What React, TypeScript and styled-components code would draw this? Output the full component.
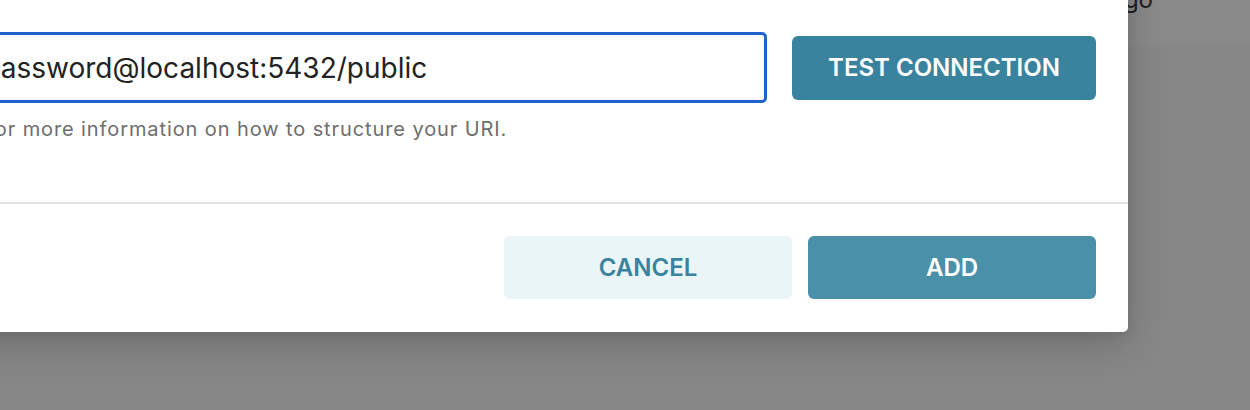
import React from "react";
import styled, { createGlobalStyle } from "styled-components";

const GlobalStyle = createGlobalStyle`
  html, body {
    margin: 0;
    padding: 0;
    background: #878787;
  }
  body {
    font-family: Inter, "Noto Sans", "Liberation Sans", sans-serif;
  }
`;

const Page = styled.div`
  position: relative;
  width: 1250px;
  height: 410px;
  overflow: hidden;
  background: #878787;
`;

const TopBar = styled.div`
  display: flex;
  justify-content: flex-end;
  align-items: flex-end;
  height: 45px;
  padding-right: 97px;
  box-sizing: border-box;
  background: #8a8a8a;
`;

const BrandText = styled.span`
  font-size: 24px;
  line-height: 1;
  color: #1e1e1e;
  margin-bottom: 33px;
`;

const Modal = styled.div`
  position: absolute;
  top: -40px;
  left: -302px;
  width: 1430px;
  background: #ffffff;
  border-radius: 5px;
  box-shadow: 0 12px 40px rgba(0, 0, 0, 0.18), 0 4px 12px rgba(0, 0, 0, 0.08);
  display: flex;
  flex-direction: column;
`;

const Body = styled.div`
  padding: 72px 32px 59px 32px;
`;

const InputRow = styled.div`
  display: flex;
  align-items: center;
  gap: 25px;
`;

const UriInput = styled.input`
  flex: 1;
  height: 71px;
  box-sizing: border-box;
  border: 3px solid #1f62c9;
  border-radius: 5px;
  padding: 0 0 0 16px;
  font-family: Inter, "Noto Sans", "Liberation Sans", sans-serif;
  font-size: 28px;
  color: #222222;
  outline: none;
  background: #fff;
`;

const Button = styled.button<{ $variant: "primary" | "solid" | "ghost" }>`
  border: 0;
  outline: 0;
  border-radius: 6px;
  font-family: Inter, "Noto Sans", "Liberation Sans", sans-serif;
  font-size: 24px;
  font-weight: 600;
  text-transform: uppercase;
  cursor: pointer;
  background: ${(p) =>
    p.$variant === "primary" ? "#3a839e" : p.$variant === "solid" ? "#4a90a8" : "#eaf5f7"};
  color: ${(p) => (p.$variant === "ghost" ? "#3a839e" : "#ffffff")};
`;

const TestButton = styled(Button)`
  width: 304px;
  height: 64px;
`;

const Helper = styled.p`
  margin: 12px 0 0 0;
  font-size: 20px;
  letter-spacing: 0.9px;
  line-height: 28px;
  color: #6e6e6e;
  white-space: nowrap;
`;

const Divider = styled.hr`
  margin: 0;
  border: 0;
  height: 2px;
  background: #e2e2e2;
`;

const Footer = styled.div`
  display: flex;
  justify-content: flex-end;
  gap: 16px;
  padding: 32px 32px 33px 32px;
`;

const FooterButton = styled(Button)`
  width: 288px;
  height: 63px;
`;

export default function App() {
  return (
    <>
      <GlobalStyle />
      <Page>
        <TopBar>
          <BrandText>Mongo</BrandText>
        </TopBar>
        <Modal>
          <Body>
            <InputRow>
              <UriInput
                defaultValue="postgresql://user:password@localhost:5432/public"
                readOnly
              />
              <TestButton $variant="primary">Test connection</TestButton>
            </InputRow>
            <Helper>Read the documentation for more information on how to structure your URI.</Helper>
          </Body>
          <Divider />
          <Footer>
            <FooterButton $variant="ghost">Cancel</FooterButton>
            <FooterButton $variant="solid">Add</FooterButton>
          </Footer>
        </Modal>
      </Page>
    </>
  );
}
